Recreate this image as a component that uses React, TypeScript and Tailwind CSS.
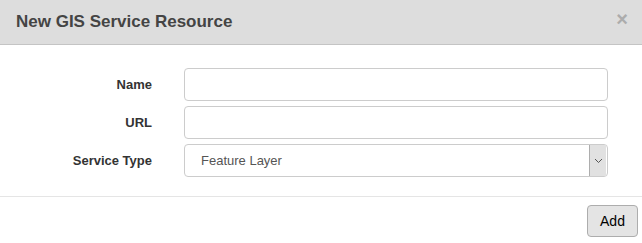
import React from "react";

export default function App() {
  const font = { fontFamily: '"Liberation Sans", Arial, sans-serif' };
  return (
    <div className="w-[642px] h-[243px] bg-white overflow-hidden" style={font}>
      <div className="h-[45px] bg-[#dddddd] border-b border-[#c4c4c4] flex items-center justify-between pl-4 pr-[14px]">
        <h4 className="text-[17px] font-bold text-[#444444] leading-none mt-[-2px]">New GIS Service Resource</h4>
        <span className="text-[#acacac] text-[20px] font-bold leading-none mt-[-6px]">×</span>
      </div>
      <div className="pt-[23px] pb-[19px] flex flex-col gap-[5px]">
        {["Name", "URL"].map((l) => (
          <div key={l} className="flex items-center">
            <label className="w-[152px] text-right text-[13px] font-bold text-[#333333]">{l}</label>
            <div className="ml-[32px] w-[424px] h-[33px] border border-[#cccccc] rounded-[4px] bg-white" />
          </div>
        ))}
        <div className="flex items-center">
          <label className="w-[152px] text-right text-[13px] font-bold text-[#333333]">Service Type</label>
          <div className="ml-[32px] w-[424px] h-[33px] border border-[#cccccc] rounded-[4px] bg-white flex items-center">
            <span className="flex-1 pl-[16px] text-[13px] text-[#555555]">Feature Layer</span>
            <div className="w-[17px] h-[31px] mr-[1px] bg-[#e1e1e1] border-l border-[#adadad] flex items-center justify-center">
              <svg width="9" height="6" viewBox="0 0 9 6">
                <path d="M1 1 L4.5 4.5 L8 1" fill="none" stroke="#555" strokeWidth="1" />
              </svg>
            </div>
          </div>
        </div>
      </div>
      <div className="border-t border-[#e5e5e5] pt-[8px] flex justify-end pr-[4px]">
        <button className="w-[51px] h-[32px] bg-[#e4e4e4] border border-[#adadad] rounded-[4px] text-[14px] text-black">
          Add
        </button>
      </div>
    </div>
  );
}
